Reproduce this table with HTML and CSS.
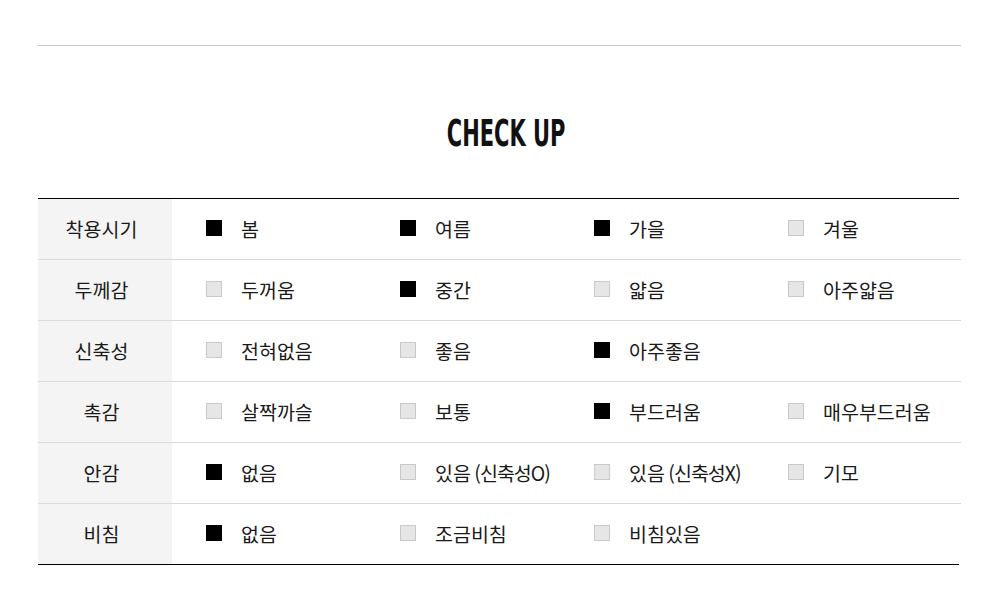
FILE: index.html
```html
<!DOCTYPE html>
<html lang="ko">
<head>
<meta charset="utf-8">
<link rel="stylesheet" href="styles.css">
</head>
<body>
<div class="wrap">
  <hr class="top-rule">
  <h2 class="title"><span>CHECK UP</span></h2>
  <div class="table">
    <div class="row">
      <div class="label">착용시기</div>
      <div class="cell"><i class="box on"></i>봄</div>
      <div class="cell"><i class="box on"></i>여름</div>
      <div class="cell"><i class="box on"></i>가을</div>
      <div class="cell"><i class="box"></i>겨울</div>
    </div>
    <div class="row">
      <div class="label">두께감</div>
      <div class="cell"><i class="box"></i>두꺼움</div>
      <div class="cell"><i class="box on"></i>중간</div>
      <div class="cell"><i class="box"></i>얇음</div>
      <div class="cell"><i class="box"></i>아주얇음</div>
    </div>
    <div class="row">
      <div class="label">신축성</div>
      <div class="cell"><i class="box"></i>전혀없음</div>
      <div class="cell"><i class="box"></i>좋음</div>
      <div class="cell"><i class="box on"></i>아주좋음</div>
      <div class="cell"></div>
    </div>
    <div class="row">
      <div class="label">촉감</div>
      <div class="cell"><i class="box"></i>살짝까슬</div>
      <div class="cell"><i class="box"></i>보통</div>
      <div class="cell"><i class="box on"></i>부드러움</div>
      <div class="cell"><i class="box"></i>매우부드러움</div>
    </div>
    <div class="row">
      <div class="label">안감</div>
      <div class="cell"><i class="box on"></i>없음</div>
      <div class="cell"><i class="box"></i>있음<span class="note"> (신축성O)</span></div>
      <div class="cell"><i class="box"></i>있음<span class="note"> (신축성X)</span></div>
      <div class="cell"><i class="box"></i>기모</div>
    </div>
    <div class="row">
      <div class="label">비침</div>
      <div class="cell"><i class="box on"></i>없음</div>
      <div class="cell"><i class="box"></i>조금비침</div>
      <div class="cell"><i class="box"></i>비침있음</div>
      <div class="cell"></div>
    </div>
  </div>
</div>
</body>
</html>
```

FILE: styles.css
```css
html, body {
  margin: 0;
  padding: 0;
  background: #fff;
}
body {
  font-family: "Noto Sans CJK KR", "Noto Sans", sans-serif;
  color: #1a1a1a;
}
.wrap {
  width: 923px;
  margin: 0 0 0 38px;
  padding-top: 45px;
}
.top-rule {
  margin: 0;
  border: 0;
  height: 1px;
  background: #c4c4c4;
}
.title {
  margin: 0;
  padding: 68px 0 0 14px;
  height: 152px;
  box-sizing: border-box;
  text-align: center;
  font-family: "DejaVu Sans Condensed", "DejaVu Sans", sans-serif;
  font-weight: bold;
  font-size: 37px;
  line-height: 40px;
  color: #111;
}
.title span {
  display: inline-block;
  transform: scaleX(0.63);
}
.table {
  border-top: 1px solid #000;
  border-bottom: 1px solid #000;
  margin-right: 2px;
}
.row {
  display: grid;
  grid-template-columns: 134px 194px 194px 194px 1fr;
  height: 61px;
  border-bottom: 1px solid #d9d9d9;
  margin-right: -2px;
  box-sizing: border-box;
}
.row:last-child {
  border-bottom: 0;
  height: 60px;
}
.label {
  background: #f4f4f4;
  display: flex;
  align-items: center;
  justify-content: center;
  font-size: 19.5px;
  padding: 0 7px 2px 0;
}
.cell {
  display: flex;
  align-items: center;
  padding-left: 34px;
  font-size: 19.5px;
  padding-bottom: 2px;
  white-space: pre;
}
.note {
  letter-spacing: -1px;
  word-spacing: -1px;
}
.box {
  display: inline-block;
  width: 16px;
  height: 16px;
  box-sizing: border-box;
  background: #e6e6e6;
  border: 1px solid #c9c9c9;
  margin-right: 19px;
  flex: none;
}
.box.on {
  background: #000;
  border-color: #000;
}
```
